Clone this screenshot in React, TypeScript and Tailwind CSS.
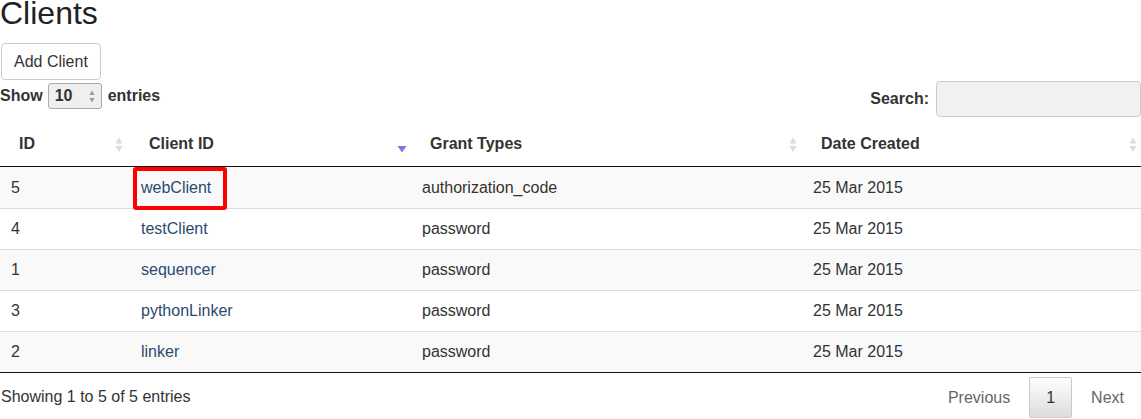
import React from "react";

type SortDir = "both" | "desc";

const SortIcon = ({ dir }: { dir: SortDir }) =>
  dir === "desc" ? (
    <svg width="10" height="16" viewBox="0 0 10 16" className="block">
      <polygon points="0.5,9 9.5,9 5,15.5" fill="#7b7bdc" />
    </svg>
  ) : (
    <svg width="8" height="16" viewBox="0 0 8 16" className="block">
      <polygon points="4,0.5 0.5,6.5 7.5,6.5" fill="#dcdcdc" />
      <polygon points="0.5,9 7.5,9 4,15" fill="#dcdcdc" />
    </svg>
  );

const columns: { label: string; sort: SortDir; width: string; iconRight: string }[] = [
  { label: "ID", sort: "both", width: "w-[130px]", iconRight: "right-[7px]" },
  { label: "Client ID", sort: "desc", width: "w-[281px]", iconRight: "right-[4px]" },
  { label: "Grant Types", sort: "both", width: "w-[391px]", iconRight: "right-[5px]" },
  { label: "Date Created", sort: "both", width: "w-[339px]", iconRight: "right-[4px]" },
];

const rows = [
  { id: "5", client: "webClient", grant: "authorization_code", date: "25 Mar 2015", marked: true },
  { id: "4", client: "testClient", grant: "password", date: "25 Mar 2015" },
  { id: "1", client: "sequencer", grant: "password", date: "25 Mar 2015" },
  { id: "3", client: "pythonLinker", grant: "password", date: "25 Mar 2015" },
  { id: "2", client: "linker", grant: "password", date: "25 Mar 2015" },
];

export default function App() {
  return (
    <div className="w-[1141px] h-[419px] overflow-hidden bg-white text-[#333] text-[16px] font-['Liberation_Sans',Arial,sans-serif]">
      <h1 className="text-[32px] leading-[27px] font-normal text-[#222] mb-[16px]">Clients</h1>

      <button className="ml-px h-[37px] px-[12px] border border-[#ccc] rounded-[4px] bg-white text-[#333] text-[16px] leading-[21px]">
        Add Client
      </button>

      <div className="mt-px flex justify-between items-start h-[35px]">
        <div className="pt-[2px] flex items-center font-bold">
          <span>Show</span>
          <div className="ml-[5px] mr-[6px] w-[54px] h-[26px] border border-[#aaa] rounded-[3px] bg-[#efefef] flex items-center justify-between pl-[6px] pr-[6px]">
            <span className="leading-none">10</span>
            <svg width="6" height="13" viewBox="0 0 6 13">
              <polygon points="3,0.5 0.5,5 5.5,5" fill="#999" />
              <polygon points="0.5,8 5.5,8 3,12.5" fill="#999" />
            </svg>
          </div>
          <span>entries</span>
        </div>
        <div className="flex items-center font-bold">
          <span>Search:</span>
          <div className="ml-[7px] w-[205px] h-[36px] border border-[#ccc] rounded-[4px] bg-[#f1f1f1]" />
        </div>
      </div>

      <table className="mt-[7px] w-[1141px] table-fixed border-collapse">
        <thead>
          <tr>
            {columns.map((c) => (
              <th
                key={c.label}
                className={`${c.width} relative text-left font-bold pl-[19px] pr-[18px] pt-[9px] pb-[11px] leading-[23px] border-b border-[#111]`}
              >
                {c.label}
                <span className={`absolute top-1/2 -translate-y-1/2 ${c.iconRight}`}>
                  <SortIcon dir={c.sort} />
                </span>
              </th>
            ))}
          </tr>
        </thead>
        <tbody>
          {rows.map((r, i) => {
            const cell = `pl-[11px] leading-[22px] ${i > 0 ? "h-[41px] border-t border-[#ddd]" : "h-[42px]"}`;
            return (
              <tr key={r.id} className={i % 2 === 0 ? "bg-[#f9f9f9]" : "bg-white"}>
                <td className={cell}>{r.id}</td>
                <td className={`${cell} relative text-[#2a4b6f]`}>
                  {r.client}
                  {r.marked && (
                    <div className="absolute left-[3px] top-0 w-[94px] h-[43px] border-[4px] border-[#f00] rounded-[3px]" />
                  )}
                </td>
                <td className={cell}>{r.grant}</td>
                <td className={cell}>{r.date}</td>
              </tr>
            );
          })}
        </tbody>
        <tfoot>
          <tr>
            <td colSpan={4} className="border-t border-[#111] p-0" />
          </tr>
        </tfoot>
      </table>

      <div className="flex justify-between items-start">
        <div className="pl-px pt-[12px] leading-[23px]">Showing 1 to 5 of 5 entries</div>
        <div className="pt-[4px] flex">
          <span className="px-[16px] py-[8px] leading-[23px] border border-transparent text-[#666]">Previous</span>
          <span className="ml-[2px] px-[16px] py-[8px] leading-[23px] border border-[#cacaca] rounded-[2px] bg-gradient-to-b from-white to-[#dcdcdc] text-[#333]">
            1
          </span>
          <span className="ml-[2px] px-[16px] py-[8px] leading-[23px] border border-transparent text-[#666]">Next</span>
        </div>
      </div>
    </div>
  );
}
